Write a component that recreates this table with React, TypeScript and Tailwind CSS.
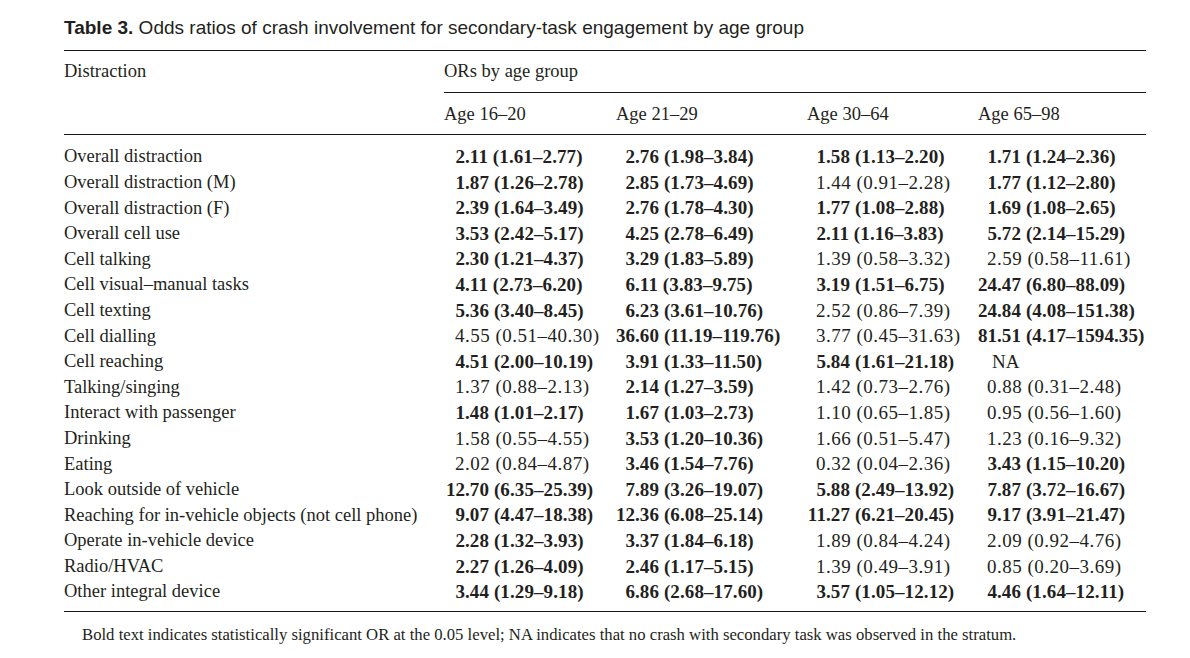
import React from "react";

const rows: [string, string, string, string, string][] = [
  ["Overall distraction", "*2.11 (1.61–2.77)", "*2.76 (1.98–3.84)", "*1.58 (1.13–2.20)", "*1.71 (1.24–2.36)"],
  ["Overall distraction (M)", "*1.87 (1.26–2.78)", "*2.85 (1.73–4.69)", "1.44 (0.91–2.28)", "*1.77 (1.12–2.80)"],
  ["Overall distraction (F)", "*2.39 (1.64–3.49)", "*2.76 (1.78–4.30)", "*1.77 (1.08–2.88)", "*1.69 (1.08–2.65)"],
  ["Overall cell use", "*3.53 (2.42–5.17)", "*4.25 (2.78–6.49)", "*2.11 (1.16–3.83)", "*5.72 (2.14–15.29)"],
  ["Cell talking", "*2.30 (1.21–4.37)", "*3.29 (1.83–5.89)", "1.39 (0.58–3.32)", "2.59 (0.58–11.61)"],
  ["Cell visual–manual tasks", "*4.11 (2.73–6.20)", "*6.11 (3.83–9.75)", "*3.19 (1.51–6.75)", "*24.47 (6.80–88.09)"],
  ["Cell texting", "*5.36 (3.40–8.45)", "*6.23 (3.61–10.76)", "2.52 (0.86–7.39)", "*24.84 (4.08–151.38)"],
  ["Cell dialling", "4.55 (0.51–40.30)", "*36.60 (11.19–119.76)", "3.77 (0.45–31.63)", "*81.51 (4.17–1594.35)"],
  ["Cell reaching", "*4.51 (2.00–10.19)", "*3.91 (1.33–11.50)", "*5.84 (1.61–21.18)", "NA"],
  ["Talking/singing", "1.37 (0.88–2.13)", "*2.14 (1.27–3.59)", "1.42 (0.73–2.76)", "0.88 (0.31–2.48)"],
  ["Interact with passenger", "*1.48 (1.01–2.17)", "*1.67 (1.03–2.73)", "1.10 (0.65–1.85)", "0.95 (0.56–1.60)"],
  ["Drinking", "1.58 (0.55–4.55)", "*3.53 (1.20–10.36)", "1.66 (0.51–5.47)", "1.23 (0.16–9.32)"],
  ["Eating", "2.02 (0.84–4.87)", "*3.46 (1.54–7.76)", "0.32 (0.04–2.36)", "*3.43 (1.15–10.20)"],
  ["Look outside of vehicle", "*12.70 (6.35–25.39)", "*7.89 (3.26–19.07)", "*5.88 (2.49–13.92)", "*7.87 (3.72–16.67)"],
  ["Reaching for in-vehicle objects (not cell phone)", "*9.07 (4.47–18.38)", "*12.36 (6.08–25.14)", "*11.27 (6.21–20.45)", "*9.17 (3.91–21.47)"],
  ["Operate in-vehicle device", "*2.28 (1.32–3.93)", "*3.37 (1.84–6.18)", "1.89 (0.84–4.24)", "2.09 (0.92–4.76)"],
  ["Radio/HVAC", "*2.27 (1.26–4.09)", "*2.46 (1.17–5.15)", "1.39 (0.49–3.91)", "0.85 (0.20–3.69)"],
  ["Other integral device", "*3.44 (1.29–9.18)", "*6.86 (2.68–17.60)", "*3.57 (1.05–12.12)", "*4.46 (1.64–12.11)"],
];

function Cell({ v, first }: { v: string; first?: boolean }) {
  const bold = v.startsWith("*");
  const t = bold ? v.slice(1) : v;
  if (t === "NA") {
    return <div className="pl-[14px]">NA</div>;
  }
  const i = t.indexOf(".");
  return (
    <div
      className={`flex whitespace-nowrap ${bold ? "font-bold tracking-[0.1px]" : "font-normal tracking-[0.5px]"} ${
        first ? "pl-[2px]" : "pl-0"
      }`}
    >
      <span className="w-[19px] text-right">{t.slice(0, i)}</span>
      <span>{t.slice(i)}</span>
    </div>
  );
}

export default function App() {
  return (
    <div className="w-[1190px] h-[658px] bg-white text-[#231f20] font-['Liberation_Serif',serif] pl-[64px] pr-[44px] pt-[16px] overflow-hidden">
      <div className="font-['Liberation_Sans',sans-serif] text-[19px] leading-[24px] h-[24px] whitespace-nowrap">
        <span className="font-bold">Table 3.</span> Odds ratios of crash involvement for secondary-task engagement by age group
      </div>
      <div className="mt-[10px] h-px bg-[#1a1a1a]" />
      <div className="flex text-[18.5px]">
        <div className="w-[380px] h-[41px] flex items-center">Distraction</div>
        <div className="flex-1 flex flex-col">
          <div className="h-[41px] flex items-center">ORs by age group</div>
          <div className="h-px bg-[#1a1a1a]" />
          <div className="h-[41px] grid grid-cols-[172px_191px_171px_168px] items-center pt-[3px]">
            <div>Age 16–20</div>
            <div>Age 21–29</div>
            <div>Age 30–64</div>
            <div>Age 65–98</div>
          </div>
        </div>
      </div>
      <div className="h-px bg-[#1a1a1a]" />
      <div className="pt-[8px] pb-[7px]">
        {rows.map((r) => (
          <div key={r[0]} className="h-[25.6px] grid grid-cols-[380px_172px_191px_171px_168px] items-center">
            <div className="text-[18.5px] whitespace-nowrap">{r[0]}</div>
            <div className="text-[19px]"><Cell v={r[1]} first /></div>
            <div className="text-[19px]"><Cell v={r[2]} /></div>
            <div className="text-[19px]"><Cell v={r[3]} /></div>
            <div className="text-[19px]"><Cell v={r[4]} /></div>
          </div>
        ))}
      </div>
      <div className="h-px bg-[#1a1a1a]" />
      <div className="mt-[13px] pl-[18px] text-[16.7px] leading-[20px] whitespace-nowrap">
        Bold text indicates statistically significant OR at the 0.05 level; NA indicates that no crash with secondary task was observed in the stratum.
      </div>
    </div>
  );
}
